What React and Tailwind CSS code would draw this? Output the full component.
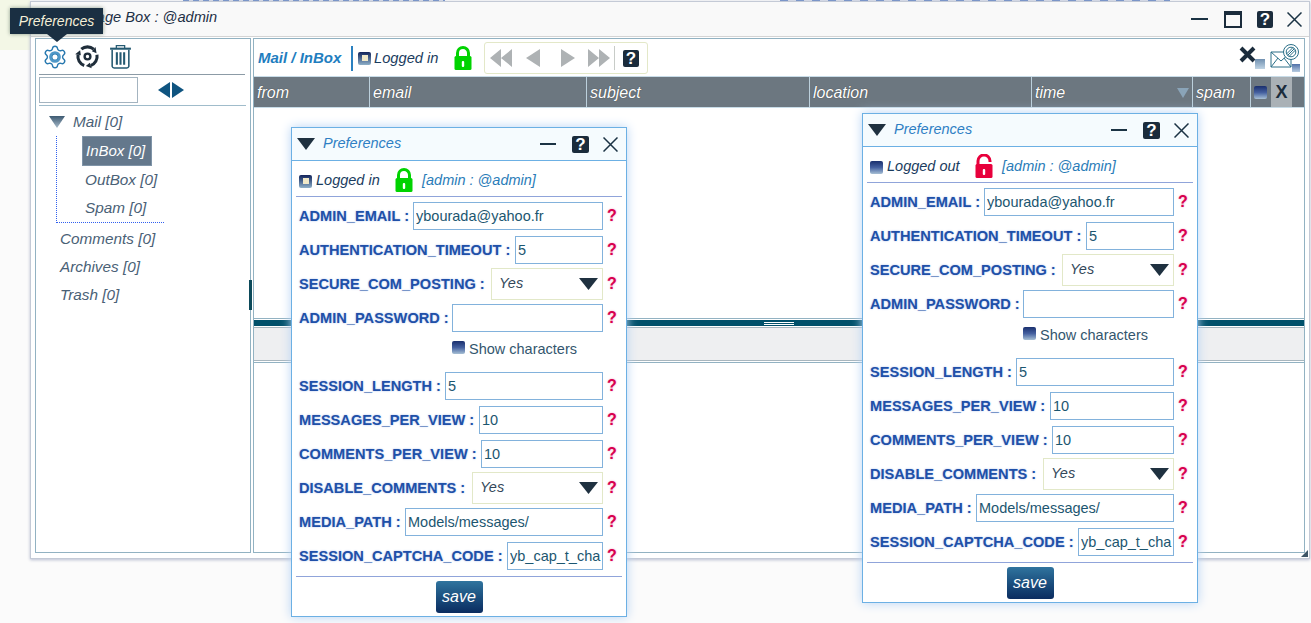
import { Settings } from 'lucide-react'

const FONT = "font-['Liberation_Sans',Arial,sans-serif]"

const rows = [
  { label: 'ADMIN_EMAIL :', value: 'ybourada@yahoo.fr', w: 'w-[190px]' },
  { label: 'AUTHENTICATION_TIMEOUT :', value: '5', w: 'w-[88px]' },
  { label: 'SECURE_COM_POSTING :', value: 'Yes', w: 'w-[112px]', select: true },
  { label: 'ADMIN_PASSWORD :', value: '', w: 'w-[151px]', password: true },
  { label: 'SESSION_LENGTH :', value: '5', w: 'w-[158px]' },
  { label: 'MESSAGES_PER_VIEW :', value: '10', w: 'w-[124px]' },
  { label: 'COMMENTS_PER_VIEW :', value: '10', w: 'w-[122px]' },
  { label: 'DISABLE_COMMENTS :', value: 'Yes', w: 'w-[131px]', select: true },
  { label: 'MEDIA_PATH :', value: 'Models/messages/', w: 'w-[198px]' },
  { label: 'SESSION_CAPTCHA_CODE :', value: 'yb_cap_t_cha', w: 'w-[96px]' },
]

function Triangle({ className = 'w-[18px] h-[12px]', fill = '#1f3140' }) {
  return (
    <svg viewBox="0 0 18 12" className={className} preserveAspectRatio="none">
      <path d="M0 0H18L9 12Z" fill={fill} />
    </svg>
  )
}

function HelpBox({ className = 'w-[17px] h-[17px]' }) {
  return (
    <span className={`${className} flex items-center justify-center rounded-[2px] bg-[#1b2c3c] text-white font-bold text-[17px] leading-none`}>?</span>
  )
}

function CloseX({ className = 'w-[15px] h-[15px]' }) {
  return (
    <svg viewBox="0 0 15 15" className={className}>
      <path d="M0.5 0.5L14.5 14.5M14.5 0.5L0.5 14.5" stroke="#1b3344" strokeWidth="1.5" fill="none" />
    </svg>
  )
}

function Minus({ className = 'w-[16px]' }) {
  return <span className={`${className} h-[2px] bg-[#1b3344] block`} />
}

function Lock({ open = false }) {
  const color = open ? '#e8003c' : '#00d300'
  return (
    <svg viewBox="0 0 18 24" className="w-[18px] h-[24px]">
      {open ? (
        <path d="M3 11V7a6 6 0 0 1 12 0v1" stroke={color} strokeWidth="3" fill="none" />
      ) : (
        <path d="M3.5 11V7a5.5 5.5 0 0 1 11 0v4" stroke={color} strokeWidth="3" fill="none" />
      )}
      <rect x="0.5" y="10" width="17" height="14" rx="1.5" fill={color} />
      <rect x="7.8" y="15" width="2.4" height="6" rx="1" fill="#fff" />
    </svg>
  )
}

function CheckOn() {
  return (
    <span className="w-[13px] h-[13px] rounded-[2px] bg-gradient-to-b from-[#14235a] to-[#8fb0c8] flex items-center justify-center shrink-0">
      <span className="w-[6px] h-[6px] bg-[#f0e8c8]" />
    </span>
  )
}

function CheckOff({ className = 'w-[13px] h-[13px]' }) {
  return <span className={`${className} rounded-[2px] bg-gradient-to-b from-[#1a2f6e] via-[#45609f] to-[#a8c0d4] block shrink-0`} />
}

function Row({ row }) {
  return (
    <div className="h-[34px] flex items-center pl-[7px]">
      <label className="mt-[2px] font-bold text-[14.6px] text-[#2050a8] whitespace-nowrap [text-shadow:0_0_2px_#a8bce8]">{row.label}</label>
      {row.select ? (
        <div className={`${row.w} ml-auto h-[32px] border border-[#e2e8c8] flex items-center justify-between pl-[7px] pr-[4px]`}>
          <span className="italic text-[14.5px] text-[#33475a] -mt-[1px]">{row.value}</span>
          <Triangle className="w-[19px] h-[12px]" />
        </div>
      ) : (
        <input
          readOnly
          value={row.value}
          className={`${row.w} ml-auto h-[28px] border border-[#82b2dc] pl-[2px] pr-[1px] text-[14.5px] text-[#1c5670] outline-none ${FONT}`}
        />
      )}
      <span className="w-[23px] shrink-0 pl-[4px] font-bold text-[16px] text-[#d8004e] [text-shadow:0_0_2px_#f0a0c0] -mt-[1px]">?</span>
    </div>
  )
}

function Dialog({ position, loggedIn }) {
  return (
    <div className={`absolute ${position} w-[336px] h-[490px] bg-white border border-[#6cb0e4] shadow-[0_0_10px_#b8d4f4]`}>
      <div className="h-[33px] bg-[#f5fbfe] border-b border-[#6cb0e4] flex items-center pl-[5px]">
        <Triangle />
        <span className="ml-[8px] italic text-[14.5px] text-[#2e7fc4]">Preferences</span>
        <div className="ml-auto flex items-center">
          <Minus />
          <HelpBox className="w-[17px] h-[17px] ml-[16px]" />
          <CloseX className="w-[15px] h-[15px] ml-[14px] mr-[8px]" />
        </div>
      </div>
      <div className="h-[35px] pt-[5px] flex items-center pl-[7px]">
        {loggedIn ? <CheckOn /> : <CheckOff />}
        <span className={`ml-[4px] italic text-[14.5px] text-[#1a3c5e] ${loggedIn ? 'w-[79px]' : 'w-[88px]'}`}>{loggedIn ? 'Logged in' : 'Logged out'}</span>
        <span className="-mt-[2px]"><Lock open={!loggedIn} /></span>
        <span className="ml-[9px] italic text-[14.5px] text-[#2a7cb8] whitespace-nowrap">[admin : @admin]</span>
      </div>
      <div className="mx-[4px] h-px bg-[#90a4da]" />
      <div className="pt-[2px]">
        {rows.slice(0, 4).map((r) => <Row key={r.label} row={r} />)}
        <div className="h-[34px] flex items-start pt-[4px] pl-[160px]">
          <CheckOff className="w-[13px] h-[13px] mt-[2px]" />
          <span className="ml-[4px] text-[14.5px] text-[#33566e]">Show characters</span>
        </div>
        {rows.slice(4).map((r) => <Row key={r.label} row={r} />)}
      </div>
      <div className="mx-[4px] mt-[3px] h-px bg-[#90a4da]" />
      <div className="flex justify-center mt-[4px]">
        <button className="w-[47px] h-[32px] rounded-[3px] bg-gradient-to-b from-[#30749e] to-[#0b2c60] text-white italic text-[16px]">save</button>
      </div>
    </div>
  )
}

function NavArrow({ dir, double }) {
  if (double) {
    return (
      <svg viewBox="0 0 22 18" className="w-[22px] h-[18px]">
        <path d={dir === 'left' ? 'M0 9L11 0V18ZM11 9L22 0V18Z' : 'M22 9L11 0V18ZM11 9L0 0V18Z'} fill="#aeb2b4" />
      </svg>
    )
  }
  return (
    <svg viewBox="0 0 14 18" className="w-[14px] h-[18px]">
      <path d={dir === 'left' ? 'M0 9L14 0V18Z' : 'M14 9L0 0V18Z'} fill="#aeb2b4" />
    </svg>
  )
}

function RefreshIcon() {
  return (
    <svg viewBox="0 0 26 26" className="w-[25px] h-[25px]" fill="none">
      <path d="M6.57 5.34A10 10 0 0 1 19.43 5.34M22.85 11.26A10 10 0 0 1 16.42 22.4M9.58 22.4A10 10 0 0 1 3.15 11.26" stroke="#1f2d3a" strokeWidth="3.2" />
      <path d="M17.5 7.64L21.36 3.04L22.4 9.58ZM15.39 19.58L17.45 25.2L11.26 22.85ZM6.1 11.78L0.2 10.74L5.34 6.57Z" fill="#1f2d3a" />
      <circle cx="13" cy="13" r="3" stroke="#1f2d3a" strokeWidth="2.5" />
    </svg>
  )
}

function TrashIcon() {
  return (
    <svg viewBox="0 0 22 24" className="w-[23px] h-[25px]" fill="none" stroke="#255a72">
      <path d="M1 4.5H21" strokeWidth="2" />
      <path d="M7 4V1.5H15V4" strokeWidth="1.2" />
      <path d="M3 5.5V21.5A2 2 0 0 0 5 23H17A2 2 0 0 0 19 21.5V5.5" strokeWidth="1.5" />
      <path d="M7.5 8V20M11 8V20M14.5 8V20" strokeWidth="2" />
    </svg>
  )
}

function MailBlockIcon() {
  return (
    <svg viewBox="0 0 30 28" className="w-[30px] h-[28px]" fill="none" stroke="#2a6f88" strokeWidth="1">
      <path d="M1 8H21V23H1ZM1 8L11 17L21 8M1 23L8 14M21 23L14 14" fill="#fff" />
      <circle cx="21" cy="8" r="7.5" fill="#fff" />
      <circle cx="21" cy="8" r="4.8" />
      <path d="M17.5 11.5L24.5 4.5M19 12.5L25.5 6M16.5 10L23 3.5" />
    </svg>
  )
}

const columns = [
  { name: 'from', w: 'w-[116px]' },
  { name: 'email', w: 'w-[217px]' },
  { name: 'subject', w: 'w-[223px]' },
  { name: 'location', w: 'w-[222px]' },
  { name: 'time', w: 'w-[161px]', sort: true },
  { name: 'spam', w: 'w-[58px]' },
]

function TreeItem({ children, className = '' }) {
  return <div className={`italic text-[15.3px] text-[#4a6176] ${className}`}>{children}</div>
}

export default function App() {
  return (
    <div className={`relative w-[1311px] h-[623px] overflow-hidden bg-[#fbfbfb] ${FONT}`}>
      {/* page behind the windows */}
      <div className="h-[50px] w-[30px] bg-[#f3f7e6]" />
      <div className="absolute left-[183px] top-0 w-[262px] h-px bg-[repeating-linear-gradient(90deg,#6f8fc8_0_6px,#d8dce8_6px_10px)]" />
      <div className="absolute left-[780px] top-0 w-[390px] h-px bg-[repeating-linear-gradient(90deg,#6f8fc8_0_8px,#d8dce8_8px_16px)]" />

      {/* main window */}
      <div className="absolute left-[30px] top-[1px] w-[1280px] h-[558px] bg-white border border-[#c4cad6] flex flex-col shadow-[0_1px_3px_#b8bdd0]">
        <div className="h-[35px] shrink-0 bg-[#f9f9f9] border-b border-[#d4d4d4] flex items-center pl-[31px] pb-[2px]">
          <span className="italic text-[14.6px] text-[#1d2f45]">Message Box : @admin</span>
          <div className="ml-auto flex items-center pt-[2px]">
            <Minus className="w-[17px]" />
            <span className="ml-[16px] w-[18px] h-[17px] border-2 border-[#1b2c3c] border-t-[4px] block" />
            <HelpBox className="w-[16px] h-[17px] ml-[15px]" />
            <CloseX className="w-[15px] h-[15px] ml-[14px] mr-[7px]" />
          </div>
        </div>

        <div className="flex-1 flex pl-[4px] pr-[4px] pt-px pb-[5px] gap-[2px]">
          {/* left panel */}
          <div className="relative w-[216px] border border-[#92b2c2] px-[3px]">
            <div className="h-[36px] flex items-center pl-[3px] gap-[7px] border-b border-[#8c9ba6] mr-[2px]">
              <Settings className="w-[26px] h-[26px] text-[#2a7ab0]" strokeWidth={1.3}>
                <circle cx="12" cy="12" r="4.2" strokeWidth="2.4" stroke="#4f98c8" />
              </Settings>
              <RefreshIcon />
              <span className="ml-[2px]"><TrashIcon /></span>
            </div>
            <div className="h-[31px] flex items-center border-b border-[#a0bccb] mr-[1px]">
              <span className="w-[99px] h-[26px] border border-[#a4b4c0] block" />
              <span className="ml-[20px] w-0 h-0 border-y-[8px] border-y-transparent border-r-[12px] border-r-[#0f5480]" />
              <span className="ml-[2px] w-0 h-0 border-y-[8px] border-y-transparent border-l-[12px] border-l-[#0f5480]" />
            </div>
            <div className="pt-[6px]">
              <div className="flex items-center h-[20px] pl-[10px]">
                <svg viewBox="0 0 16 12" className="w-[16px] h-[12px]">
                  <defs>
                    <linearGradient id="tree-tri" x1="0" y1="0" x2="0" y2="1">
                      <stop offset="0" stopColor="#3d5a72" />
                      <stop offset="1" stopColor="#a9bccb" />
                    </linearGradient>
                  </defs>
                  <path d="M0 0H16L8 12Z" fill="url(#tree-tri)" />
                </svg>
                <TreeItem className="ml-[8px]">Mail [0]</TreeItem>
              </div>
              <div className="ml-[17px] mt-[4px] w-[108px] h-[87px] border-l border-b border-dotted border-[#3060f0] pl-[25px]">
                <div className="w-[70px] h-[30px] bg-[#64788c] border border-[#7f94a8] flex items-center pl-[3px] italic text-[15px] text-white whitespace-nowrap">InBox [0]</div>
                <TreeItem className="h-[28px] flex items-center pl-[3px] whitespace-nowrap">OutBox [0]</TreeItem>
                <TreeItem className="h-[28px] flex items-center pl-[3px] whitespace-nowrap">Spam [0]</TreeItem>
              </div>
              <div className="pl-[21px] pt-[2px]">
                <TreeItem className="h-[28px] flex items-center">Comments [0]</TreeItem>
                <TreeItem className="h-[28px] flex items-center">Archives [0]</TreeItem>
                <TreeItem className="h-[28px] flex items-center">Trash [0]</TreeItem>
              </div>
            </div>
            <span className="absolute -right-[2px] top-[241px] w-[3px] h-[30px] bg-[#0c4a5a]" />
          </div>

          {/* right panel */}
          <div className="flex-1 flex flex-col border border-[#92b2c2]">
            <div className="h-[37px] shrink-0 flex items-center pl-[4px] pt-[1px]">
              <span className="font-bold italic text-[15px] text-[#1f7ec0] w-[93px]">Mail / InBox</span>
              <span className="w-[2px] h-[25px] bg-[#2a80c0]" />
              <span className="ml-[5px]"><CheckOn /></span>
              <span className="ml-[3px] italic text-[14.7px] text-[#1a3c5e] w-[80px]">Logged in</span>
              <Lock />
              <div className="ml-[12px] w-[164px] h-[32px] border border-[#e3e8c8] rounded-[3px] flex items-center pl-[5px]">
                <NavArrow dir="left" double />
                <span className="ml-[14px]"><NavArrow dir="left" /></span>
                <span className="ml-[21px]"><NavArrow dir="right" /></span>
                <span className="ml-[13px]"><NavArrow dir="right" double /></span>
                <span className="ml-[4px] w-px h-[24px] bg-[#c8ccc8]" />
                <HelpBox className="w-[16px] h-[17px] ml-[8px]" />
              </div>
              <div className="ml-auto flex items-center pr-[4px]">
                <div className="relative w-[26px] h-[24px]">
                  <svg viewBox="0 0 17 17" className="w-[17px] h-[17px]">
                    <path d="M2 2L15 15M15 2L2 15" stroke="#1b2c3c" strokeWidth="4" />
                  </svg>
                  <span className="absolute right-0 bottom-[1px] w-[10px] h-[10px] bg-gradient-to-b from-[#7090b0] to-[#c0d4e4]" />
                </div>
                <div className="relative ml-[5px] w-[30px] h-[28px]">
                  <MailBlockIcon />
                  <span className="absolute right-0 bottom-0 w-[8px] h-[8px] bg-gradient-to-b from-[#5070a8] to-[#b8cce0]" />
                </div>
              </div>
            </div>

            <div className="h-[32px] shrink-0 flex bg-[#6c7780] border-y border-[#c8dce8]">
              {columns.map((c) => (
                <div key={c.name} className={`${c.w} shrink-0 border-r border-[#bcd0dc] flex items-center justify-between pl-[3px] pr-[3px] pt-[2px] italic text-[16px] text-white [text-shadow:0_0_1px_#333]`}>
                  {c.name}
                  {c.sort && (
                    <svg viewBox="0 0 12 10" className="w-[12px] h-[10px]">
                      <path d="M0 0H12L6 10Z" fill="#8aa4b8" />
                    </svg>
                  )}
                </div>
              ))}
              <div className="w-[19px] shrink-0 flex items-center justify-center">
                <CheckOff className="w-[13px] h-[13px]" />
              </div>
              <div className="w-[21px] shrink-0 bg-[#aab1b6] flex items-center justify-center font-bold text-[18px] text-[#1b2c3c] mx-px">X</div>
            </div>

            <div className="h-[211px] shrink-0 border-b border-[#92b2c2]" />
            <div className="h-[6px] mt-px shrink-0 bg-[#00506a] flex flex-col items-center justify-center gap-px">
              <span className="w-[30px] h-px bg-white" />
              <span className="w-[30px] h-px bg-white" />
            </div>
            <div className="h-[34px] shrink-0 mt-px bg-[#eeeff1] border-y border-[#a8b6be]" />
            <div className="flex-1 mt-px border-t border-[#92b2c2]" />
          </div>
        </div>

        <span className="absolute right-[1px] bottom-[1px] w-0 h-0 border-l-[7px] border-l-transparent border-b-[7px] border-b-[#3d5566]" />
      </div>

      {/* preferences windows */}
      <Dialog position="left-[291px] top-[127px]" loggedIn />
      <Dialog position="left-[862px] top-[113px]" loggedIn={false} />

      {/* tooltip */}
      <div className="absolute left-[10px] top-[8px] w-[93px] h-[26px] bg-[#1a2f42] flex items-center justify-center italic text-[14px] text-[#f6f0d8] shadow-[0_0_4px_#8a9a8a]">
        Preferences
        <span className="absolute left-[37px] -bottom-[8px] w-0 h-0 border-x-[10px] border-x-transparent border-t-[8px] border-t-[#1a2f42]" />
      </div>
    </div>
  )
}
